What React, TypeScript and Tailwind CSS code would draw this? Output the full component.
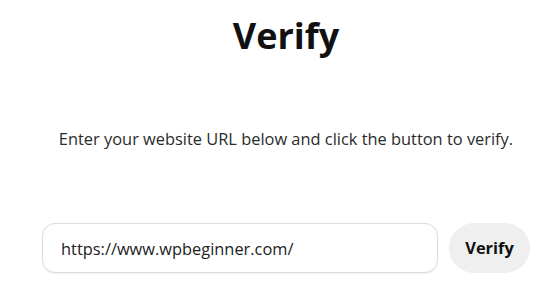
import { useState } from 'react'

export default function App() {
  const [url, setUrl] = useState('https://www.wpbeginner.com/')

  return (
    <div className="min-h-[298px] bg-white pl-[22px] font-['Open_Sans',sans-serif] text-[#1b1b1b]">
      <div className="flex flex-col items-center">
        <h1 className="mt-[8px] text-[36px] leading-[56px] font-bold text-[#111]">Verify</h1>

        <p className="mt-[63px] text-[16.4px] leading-[24px] text-[#2b2b2b]">
          Enter your website URL below and click the button to verify.
        </p>

        {/* URL form */}
        <div className="mt-[72px] flex items-center gap-[11px]">
          <input
            type="text"
            value={url}
            onChange={e => setUrl(e.target.value)}
            className="h-[50px] w-[396px] rounded-[13px] border border-[#dcdcdc] bg-white px-[18px] text-[16.4px] text-[#222] shadow-[0_1px_2px_rgba(0,0,0,0.06)] outline-none"
          />
          <button className="h-[50px] w-[81px] rounded-[25px] bg-[#efefef] text-[16.4px] font-bold text-[#111]">
            Verify
          </button>
        </div>
      </div>
    </div>
  )
}
